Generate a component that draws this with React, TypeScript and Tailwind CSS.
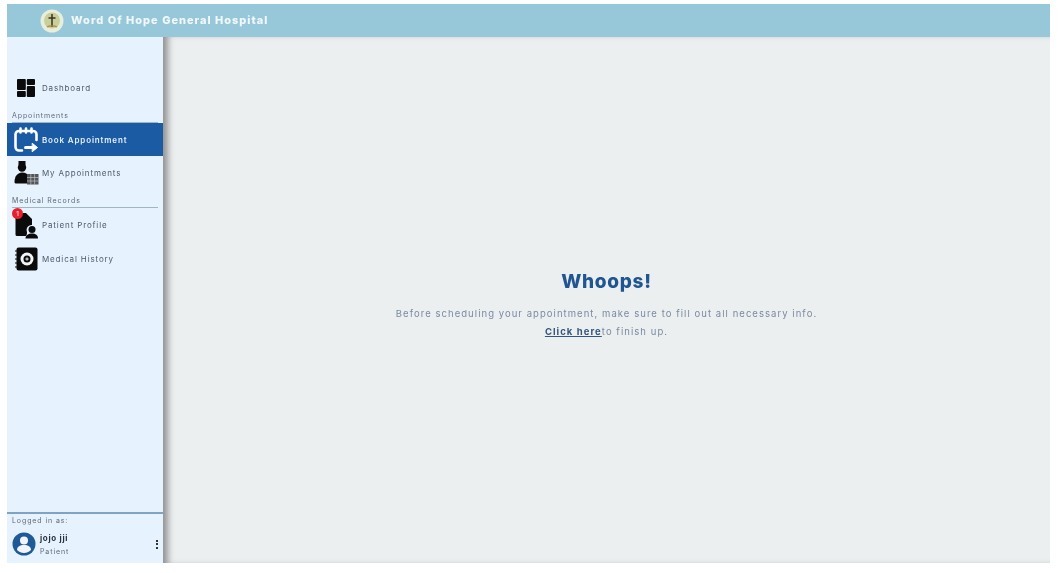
const font = { fontFamily: '"Inter", "Liberation Sans", sans-serif' };

function DashboardIcon() {
  return (
    <svg width="20" height="20" viewBox="0 0 20 20" fill="#0b0b0b">
      <rect x="1" y="1" width="8.800" height="11" rx="1" />
      <rect x="10.800" y="1" width="8.200" height="6" rx="1" />
      <rect x="1" y="13" width="8.800" height="6" rx="1" />
      <rect x="10.800" y="8" width="8.200" height="11" rx="1" />
    </svg>
  );
}

function BookIcon() {
  return (
    <svg width="26" height="26" viewBox="0 0 26 26" fill="none" stroke="#fff" strokeWidth="2.600" strokeLinecap="round" strokeLinejoin="round">
      <path d="M9 23.500H6a3.500 3.500 0 0 1-3.500-3.500V7.500A3.500 3.500 0 0 1 6 4h14a3.500 3.500 0 0 1 3.500 3.500V13" />
      <path d="M7.500 1.500v4M13 1.500v4M18.500 1.500v4" />
      <path d="M12.500 20.500h9" strokeWidth="3" />
      <path d="M19.500 16.500l5 4-5 4z" fill="#fff" strokeWidth="1" />
    </svg>
  );
}

function AppointmentsIcon() {
  return (
    <svg width="25" height="25" viewBox="0 0 25 25">
      <path d="M4.500 0h7v4h-7z" fill="#0b0b0b" />
      <circle cx="8" cy="6.500" r="4.200" fill="#0b0b0b" />
      <path d="M0.500 21c0-6 3.500-9.500 7.500-9.500s6 2 7 4v7H2.500C1.300 22.500 0.500 22 0.500 21z" fill="#0b0b0b" />
      <rect x="13" y="13" width="11.500" height="10.500" fill="#555" />
      <path d="M13 16.500h11.500M13 20h11.500M16.800 13v10.500M20.600 13v10.500" stroke="#c8d0d8" strokeWidth="0.600" />
    </svg>
  );
}

function ProfileIcon() {
  return (
    <svg width="25" height="27" viewBox="0 0 25 27" fill="#0b0b0b">
      <path d="M3 1h9l6 6v6a5 5 0 0 0-5 7c0 1 0 3-1 4H3a1.500 1.500 0 0 1-1.500-1.500v-20A1.500 1.500 0 0 1 3 1z" />
      <circle cx="18" cy="17.500" r="3.500" />
      <path d="M11.500 26.500c0-3.500 3-5 6.500-5s6 1.500 6 5z" />
    </svg>
  );
}

function HistoryIcon() {
  return (
    <svg width="24" height="24" viewBox="0 0 24 24">
      <rect x="2.500" y="0.500" width="21" height="23" rx="2" fill="#0b0b0b" />
      <path d="M1 4h3M1 8h3M1 12h3M1 16h3M1 20h3" stroke="#0b0b0b" strokeWidth="1.200" />
      <circle cx="13" cy="12" r="6.500" fill="#f2f4f6" />
      <circle cx="13" cy="12" r="3.500" fill="#0b0b0b" />
      <path d="M11.300 12h3.400M13 10.300v3.400" stroke="#f2f4f6" strokeWidth="1" />
    </svg>
  );
}

function Logo() {
  return (
    <svg width="24" height="24" viewBox="0 0 24 24">
      <circle cx="12" cy="12" r="11.500" fill="#e8eddc" />
      <circle cx="12" cy="11.500" r="8" fill="#c9cf9a" />
      <path d="M12 5v13M8.500 9h7" stroke="#3a3320" strokeWidth="1.500" />
      <path d="M7 18c2-1.500 8-1.500 10 0" stroke="#b08a3a" strokeWidth="1.200" fill="none" />
    </svg>
  );
}

function NavRow({ label, icon, active, badge }: { label: string; icon: React.ReactNode; active?: boolean; badge?: boolean }) {
  return (
    <div className={`relative flex items-center ${active ? 'h-[33px] bg-[#1a5ba3] text-[#e6f0fa] font-semibold' : 'h-[34px] text-[#4d5a68]'}`}>
      <div className="flex w-[35px] shrink-0 justify-center pl-[3px]">{icon}</div>
      <span className="text-[8px] tracking-[0.85px] whitespace-nowrap">{label}</span>
      {badge && (
        <span className="absolute left-[5px] top-[0px] flex h-[11px] w-[11px] items-center justify-center rounded-full bg-[#e8202e] text-[6px] font-bold text-[#f5c5c8]">
          1
        </span>
      )}
    </div>
  );
}

function SectionLabel({ label }: { label: string }) {
  return (
    <div className="mx-[5px] mt-[6px] border-b border-[#9fb6c9] pb-[2px] text-[7px] leading-[9px] tracking-[0.9px] text-[#5e6b78]">
      {label}
    </div>
  );
}

export default function App() {
  return (
    <div className="h-[573px] w-[1059px] overflow-hidden bg-white pb-[10px] pl-[7px] pr-[9px] pt-[4px] blur-[0.7px]" style={font}>
      <div className="flex h-full flex-col">
        {/* Header */}
        <header className="flex h-[33px] shrink-0 items-center gap-[7px] bg-[#96c8da] pl-[33px]">
          <Logo />
          <span className="text-[11px] font-extrabold tracking-[1px] text-[#f2f8fa]">Word Of Hope General Hospital</span>
        </header>

        <div className="flex min-h-0 flex-1">
          {/* Sidebar */}
          <aside className="flex w-[156px] shrink-0 flex-col bg-[#e6f2fe] pt-[34px]">
            <NavRow label="Dashboard" icon={<DashboardIcon />} />
            <SectionLabel label="Appointments" />
            <NavRow label="Book Appointment" icon={<BookIcon />} active />
            <NavRow label="My Appointments" icon={<AppointmentsIcon />} />
            <SectionLabel label="Medical Records" />
            <NavRow label="Patient Profile" icon={<ProfileIcon />} badge />
            <NavRow label="Medical History" icon={<HistoryIcon />} />

            <div className="mt-auto h-[51px] border-t-2 border-[#7ea3c4] px-[5px] pt-[2px]">
              <div className="text-[7px] leading-[9px] tracking-[0.9px] text-[#5e6b78]">Logged in as:</div>
              <div className="mt-[7px] flex items-center">
                <svg width="24" height="24" viewBox="0 0 24 24" className="shrink-0">
                  <circle cx="12" cy="12" r="11.500" fill="#1f5a96" />
                  <circle cx="12" cy="8.500" r="4" fill="#f1f5f9" />
                  <path d="M5 18c0-3.500 3-5 7-5s7 1.500 7 5c-2 2-4.500 3-7 3s-5-1-7-3z" fill="#f1f5f9" />
                </svg>
                <div className="ml-[4px] flex-1">
                  <div className="text-[8px] font-bold leading-[11px] tracking-[0.7px] text-[#26303a]">jojo jji</div>
                  <div className="mt-[3px] text-[7px] leading-[9px] tracking-[0.9px] text-[#5e6b78]">Patient</div>
                </div>
                <div className="flex flex-col gap-[1.500px]">
                  <span className="h-[2px] w-[2px] bg-[#333]" />
                  <span className="h-[2px] w-[2px] bg-[#333]" />
                  <span className="h-[2px] w-[2px] bg-[#333]" />
                </div>
              </div>
            </div>
          </aside>

          {/* Main */}
          <main className="flex flex-1 flex-col items-center bg-[#eceff0] pt-[233px] text-center shadow-[inset_8px_0_6px_-3px_rgba(60,60,60,0.5)]">
            <h1 className="text-[19px] font-extrabold leading-[24px] tracking-[0.7px] text-[#1f5590]">Whoops!</h1>
            <p className="mt-[11px] text-[9.500px] leading-[18px] tracking-[1.05px] text-[#7a8aa0]">
              Before scheduling your appointment, make sure to fill out all necessary info.
              <br />
              <span className="font-bold text-[#33567c] underline">Click here</span>to finish up.
            </p>
          </main>
        </div>
      </div>
    </div>
  );
}
